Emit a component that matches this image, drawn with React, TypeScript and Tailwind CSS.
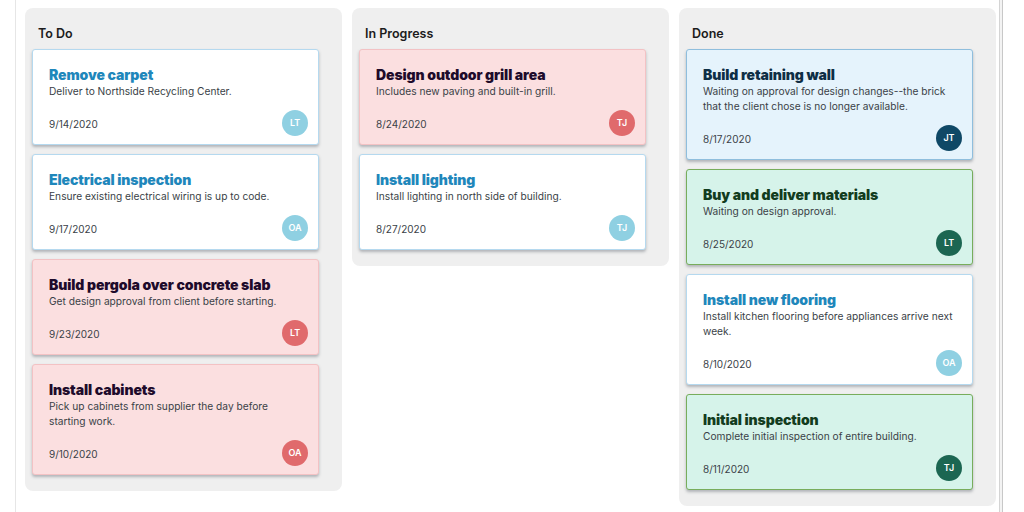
import React from "react";

type Tone = "blue" | "red" | "sky" | "green";

type Task = {
  title: string;
  note: string;
  date: string;
  who: string;
  tone: Tone;
};

const columns: { name: string; tasks: Task[] }[] = [
  {
    name: "To Do",
    tasks: [
      { title: "Remove carpet", note: "Deliver to Northside Recycling Center.", date: "9/14/2020", who: "LT", tone: "blue" },
      { title: "Electrical inspection", note: "Ensure existing electrical wiring is up to code.", date: "9/17/2020", who: "OA", tone: "blue" },
      { title: "Build pergola over concrete slab", note: "Get design approval from client before starting.", date: "9/23/2020", who: "LT", tone: "red" },
      { title: "Install cabinets", note: "Pick up cabinets from supplier the day before starting work.", date: "9/10/2020", who: "OA", tone: "red" },
    ],
  },
  {
    name: "In Progress",
    tasks: [
      { title: "Design outdoor grill area", note: "Includes new paving and built-in grill.", date: "8/24/2020", who: "TJ", tone: "red" },
      { title: "Install lighting", note: "Install lighting in north side of building.", date: "8/27/2020", who: "TJ", tone: "blue" },
    ],
  },
  {
    name: "Done",
    tasks: [
      { title: "Build retaining wall", note: "Waiting on approval for design changes--the brick that the client chose is no longer available.", date: "8/17/2020", who: "JT", tone: "sky" },
      { title: "Buy and deliver materials", note: "Waiting on design approval.", date: "8/25/2020", who: "LT", tone: "green" },
      { title: "Install new flooring", note: "Install kitchen flooring before appliances arrive next week.", date: "8/10/2020", who: "OA", tone: "blue" },
      { title: "Initial inspection", note: "Complete initial inspection of entire building.", date: "8/11/2020", who: "TJ", tone: "green" },
    ],
  },
];

// card look per tone
const toneClasses: Record<Tone, { card: string; title: string; avatar: string }> = {
  blue: {
    card: "bg-white border-[#b5d9ef]",
    title: "text-[#1f87bb]",
    avatar: "bg-[#8fd0e2]",
  },
  red: {
    card: "bg-[#fbdfe0] border-[#f3c2c4]",
    title: "text-[#1e0b2b]",
    avatar: "bg-[#e06a6c]",
  },
  sky: {
    card: "bg-[#e5f3fc] border-[#8fbedd]",
    title: "text-[#0e2e45]",
    avatar: "bg-[#0f4866]",
  },
  green: {
    card: "bg-[#d6f3ea] border-[#78ad5c]",
    title: "text-[#123c1e]",
    avatar: "bg-[#1c6652]",
  },
};

function TaskCard({ task }: { task: Task }) {
  const t = toneClasses[task.tone];
  return (
    <div className={`w-[287px] rounded-[3px] border-[1.5px] ${t.card} shadow-[0_2px_3px_rgba(60,70,80,0.35)] pl-[16px] pr-[16px] pt-[16px] pb-[8px]`}>
      <div className={`text-[14px] leading-[18px] font-black tracking-[-0.1px] ${t.title}`}>{task.title}</div>
      <div className="text-[10.2px] leading-[15px] text-[#3a3f47]">{task.note}</div>
      <div className="mt-[11px] -mr-[6px] flex items-center justify-between">
        <span className="text-[10px] text-[#3a3f47] pt-[3px]">{task.date}</span>
        <span className={`flex h-[26px] w-[26px] items-center justify-center rounded-full text-[9px] font-semibold text-white ${t.avatar}`}>
          {task.who}
        </span>
      </div>
    </div>
  );
}

export default function App() {
  return (
    <div className="flex h-[512px] w-[1024px] bg-white" style={{ fontFamily: "Inter, 'Noto Sans', sans-serif" }}>
      {/* left rule */}
      <div className="w-[16px] shrink-0 border-r border-[#e6e6e6]" />

      <div className="flex items-start gap-[10px] pl-[9px] pt-[8px]">
        {columns.map((col) => (
          <div key={col.name} className="w-[317px] rounded-[8px] bg-[#efefef] pl-[7px] pt-[18px] pb-[16px]">
            <div className="pl-[6px] text-[12.5px] font-semibold leading-[16px] text-[#1c1c1c]">{col.name}</div>
            <div className="mt-[7px] flex flex-col gap-[9px]">
              {col.tasks.map((task) => (
                <TaskCard key={task.title} task={task} />
              ))}
            </div>
          </div>
        ))}
      </div>

      {/* right scrollbar edge */}
      <div className="ml-[3px] flex h-full">
        <div className="w-[1px] bg-[#d4d4d4]" />
        <div className="w-[2px] bg-[#f3f3f3]" />
        <div className="w-[1px] bg-[#c8c8c8]" />
      </div>
    </div>
  );
}
